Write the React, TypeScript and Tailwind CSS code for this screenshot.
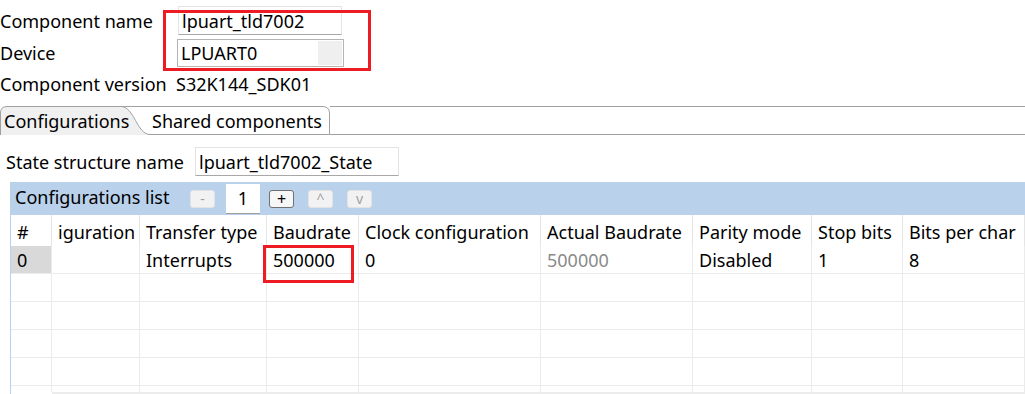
import React from "react";

const cols = [
  { w: 41, h: "#", v: "0" },
  { w: 88, h: "iguration", v: "" },
  { w: 127, h: "Transfer type", v: "Interrupts" },
  { w: 92, h: "Baudrate", v: "500000" },
  { w: 182, h: "Clock configuration", v: "0" },
  { w: 152, h: "Actual Baudrate", v: "500000" },
  { w: 119, h: "Parity mode", v: "Disabled" },
  { w: 91, h: "Stop bits", v: "1" },
  { w: 122, h: "Bits per char", v: "8" },
];

function SmallBtn({ label, enabled }: { label: string; enabled?: boolean }) {
  return (
    <div
      className={
        enabled
          ? "flex h-[18px] w-[25px] items-center justify-center rounded-[3px] border border-[#707070] bg-[#f7f7f7] text-[16px] leading-none text-black"
          : "flex h-[18px] w-[25px] items-center justify-center rounded-[3px] border border-[#e3e3e3] bg-[#f2f2f2] text-[14px] leading-none text-[#a0a0a0]"
      }
    >
      {label}
    </div>
  );
}

export default function App() {
  return (
    <div
      className="relative h-[394px] w-[1025px] overflow-hidden bg-white text-[18px] leading-none text-black"
      style={{ fontFamily: '"Noto Sans", "Open Sans", sans-serif' }}
    >
      {/* Component name */}
      <div className="flex items-center pt-[6px]">
        <div className="w-[178px]">Component name</div>
        <div className="flex h-[29px] w-[164px] items-center border border-[#e3e3e3] border-b-[#a8a8a8] pl-[3px]">
          lpuart_tld7002
        </div>
      </div>
      {/* Device */}
      <div className="mt-[4px] flex items-center">
        <div className="w-[177px]">Device</div>
        <div className="flex h-[28px] w-[167px] items-center justify-between border border-[#b4b4b4] pl-[3px]">
          <span>LPUART0</span>
          <div className="mr-px h-[24px] w-[24px] bg-[#efefef]" />
        </div>
      </div>
      {/* Component version */}
      <div className="mt-[3px] flex h-[28px] items-center">
        <div className="w-[176px]">Component version</div>
        <div>S32K144_SDK01</div>
      </div>

      {/* Tabs */}
      <div className="mt-[8px] flex h-[29px]">
        <div className="relative w-[330px] shrink-0">
          <svg className="absolute inset-0" width="330" height="29" viewBox="0 0 330 29">
            <path d="M120 0.5 H322 Q329.5 0.5 329.5 7 V29 H140 Z" fill="#ffffff" />
            <path d="M120 0.5 H322 Q329.5 0.5 329.5 7 V28.5 H148" fill="none" stroke="#a0a0a0" strokeWidth="1" />
            <path d="M0.5 29 V7 Q0.5 0.5 7 0.5 H121 C134 0.5 137 28.5 150 28.5 V29 Z" fill="#f0f0f0" />
            <path d="M0.5 29 V7 Q0.5 0.5 7 0.5 H121 C134 0.5 137 28.5 150 28.5" fill="none" stroke="#a0a0a0" strokeWidth="1" />
          </svg>
          <div className="relative flex h-full items-center">
            <span className="w-[152px] pl-[4px]">Configurations</span>
            <span>Shared components</span>
          </div>
        </div>
        <div className="flex-1 border-y border-[#a0a0a0]" />
      </div>

      {/* State structure name */}
      <div className="mt-[12px] flex items-center">
        <div className="w-[195px] pl-[6px]">State structure name</div>
        <div className="flex h-[29px] w-[204px] items-center border border-[#e3e3e3] border-b-[#a8a8a8] pl-[3px]">
          lpuart_tld7002_State
        </div>
      </div>

      {/* Configurations list panel */}
      <div className="ml-[10px] mt-[6px] border-l border-[#b9d1ea]">
        <div className="flex h-[33px] items-center bg-[#b9d1ea]">
          <div className="w-[179px] pl-[4px] pb-[3px]">Configurations list</div>
          <SmallBtn label="-" />
          <div className="ml-[11px] flex h-[30px] w-[34px] items-center justify-center border-b border-[#a0a0a0] bg-white">
            1
          </div>
          <div className="ml-[9px]">
            <SmallBtn label="+" enabled />
          </div>
          <div className="ml-[14px]">
            <SmallBtn label="^" />
          </div>
          <div className="ml-[14px]">
            <SmallBtn label="v" />
          </div>
        </div>

        {/* Table */}
        <div className="flex h-[31px]">
          {cols.map((c, i) => (
            <div
              key={i}
              className="flex shrink-0 items-center border-r border-[#e5e5e5] pl-[6px] pt-[2px]"
              style={{ width: c.w }}
            >
              {c.h}
            </div>
          ))}
        </div>
        <div className="flex h-[28px] border-b border-[#ebebeb]">
          {cols.map((c, i) => (
            <div
              key={i}
              className={
                i === 0
                  ? "flex shrink-0 items-center border-r border-[#ebebeb] bg-[#d9d9d9] pl-[6px]"
                  : i === 5
                  ? "flex shrink-0 items-center border-r border-[#ebebeb] pl-[6px] text-[#8a8a8a]"
                  : "flex shrink-0 items-center border-r border-[#ebebeb] pl-[6px]"
              }
              style={{ width: c.w }}
            >
              {c.v}
            </div>
          ))}
        </div>
        {[0, 1, 2, 3].map((r) => (
          <div key={r} className="flex h-[28px] border-b border-[#ebebeb]">
            {cols.map((c, i) => (
              <div key={i} className="shrink-0 border-r border-[#ebebeb]" style={{ width: c.w }} />
            ))}
          </div>
        ))}
        <div className="flex h-[6px]">
          {cols.map((c, i) => (
            <div key={i} className="shrink-0 border-r border-[#ebebeb]" style={{ width: c.w }} />
          ))}
        </div>
        <div className="ml-[41px] h-[3px] bg-[#ececec]" />
      </div>

      {/* red annotation boxes */}
      <div className="absolute left-[163px] top-[10px] h-[61px] w-[208px] border-[3px] border-[#ed1c24]" />
      <div className="absolute left-[263px] top-[245px] h-[38px] w-[91px] border-[3px] border-[#ed1c24]" />
    </div>
  );
}
